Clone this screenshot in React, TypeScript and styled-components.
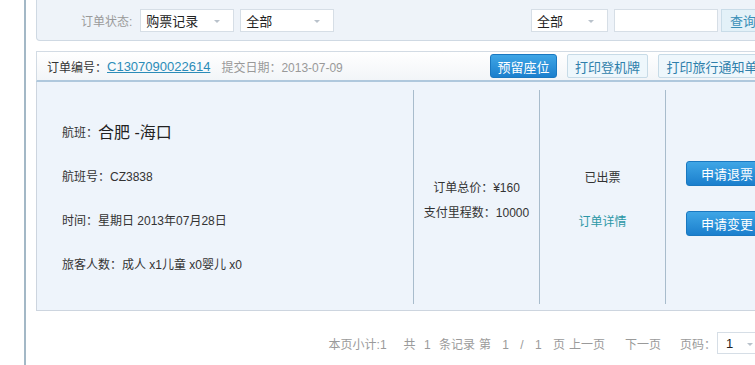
import React from "react";
import styled, { createGlobalStyle } from "styled-components";

const GlobalStyle = createGlobalStyle`
  html, body {
    margin: 0;
    padding: 0;
    background: #ffffff;
    overflow: hidden;
  }
  body {
    font-family: "Liberation Sans", "Noto Sans CJK SC", Arial, sans-serif;
    font-size: 12px;
    color: #333333;
  }
`;

const passengers = [
  { label: "成人", count: 1 },
  { label: "儿童", count: 0 },
  { label: "婴儿", count: 0 },
];

const App = () => {
  return (
    <>
      <GlobalStyle />
      <Page>
        <SideRule />
        <Content>
          <FilterPanel>
            <FilterLabel>订单状态:</FilterLabel>
            <Select $width={94}>
              购票记录
              <Caret />
            </Select>
            <Select $width={94}>
              全部
              <Caret />
            </Select>
            <SearchGroup>
              <Select $width={77}>
                全部
                <Caret />
              </Select>
              <SearchInput />
              <QueryButton>查询</QueryButton>
            </SearchGroup>
          </FilterPanel>

          <OrderCard>
            <OrderHeader>
              <HeaderLabel>订单编号：</HeaderLabel>
              <OrderLink>C1307090022614</OrderLink>
              <SubmitDate>提交日期：2013-07-09</SubmitDate>
              <HeaderActions>
                <PrimaryButton $width={67} $height={24}>
                  预留座位
                </PrimaryButton>
                <GhostButton $width={81}>打印登机牌</GhostButton>
                <GhostButton $width={108}>打印旅行通知单</GhostButton>
              </HeaderActions>
            </OrderHeader>

            <OrderBody>
              <FlightColumn>
                <InfoLine>
                  航班：<Route>合肥 -海口</Route>
                </InfoLine>
                <InfoLine>航班号：CZ3838</InfoLine>
                <InfoLine>时间：星期日 2013年07月28日</InfoLine>
                <InfoLine>
                  旅客人数：
                  {passengers.map((p) => `${p.label} x${p.count}`).join("")}
                </InfoLine>
              </FlightColumn>

              <CenterColumn $lineHeight={25} $offset={8}>
                <div>订单总价：¥160</div>
                <div>支付里程数：10000</div>
              </CenterColumn>

              <CenterColumn $lineHeight={44} $offset={6}>
                <div>已出票</div>
                <DetailLink>订单详情</DetailLink>
              </CenterColumn>

              <ActionColumn>
                <PrimaryButton $width={82} $height={25}>
                  申请退票
                </PrimaryButton>
                <PrimaryButton $width={82} $height={25}>
                  申请变更
                </PrimaryButton>
              </ActionColumn>
            </OrderBody>
          </OrderCard>

          <Pager>
            <PagerText>本页小计:1</PagerText>
            <PagerText $gap={17} $spacing={5}>
              共 1 条记录
            </PagerText>
            <PagerText $gap={4} $spacing={8}>
              第 1 / 1 页
            </PagerText>
            <PagerText $gap={4}>上一页</PagerText>
            <PagerText $gap={20}>下一页</PagerText>
            <PagerText $gap={19}>页码：</PagerText>
            <PageSelect>
              1
              <Caret />
            </PageSelect>
          </Pager>
        </Content>
      </Page>
    </>
  );
};

export default App;

const Page = styled.div`
  display: flex;
  width: 800px;
  min-height: 365px;
`;

const SideRule = styled.div`
  width: 2px;
  margin-left: 24px;
  margin-right: 10px;
  background: #a3b8c6;
  align-self: stretch;
  min-height: 365px;
`;

const Content = styled.div`
  width: 740px;
  display: flex;
  flex-direction: column;
`;

const FilterPanel = styled.div`
  height: 40px;
  display: flex;
  align-items: center;
  gap: 6px;
  padding: 0 10px 0 44px;
  background: #eef3f9;
  border: 1px solid #cfd9e3;
  border-top: none;
  border-radius: 0 0 4px 4px;
`;

const FilterLabel = styled.span`
  color: #9a9a9a;
  font-size: 12px;
  margin-right: 2px;
`;

const Select = styled.div<{ $width: number }>`
  position: relative;
  width: ${(p) => p.$width}px;
  height: 23px;
  box-sizing: border-box;
  display: flex;
  align-items: center;
  padding-left: 5px;
  background: #ffffff;
  border: 1px solid #d6dee6;
  font-size: 13px;
  color: #222;
`;

const Caret = styled.span`
  position: absolute;
  right: 13px;
  top: 10px;
  width: 0;
  height: 0;
  border-left: 3px solid transparent;
  border-right: 3px solid transparent;
  border-top: 3px solid #b9c2cb;
`;

const SearchGroup = styled.div`
  margin-left: auto;
  display: flex;
  align-items: center;
`;

const SearchInput = styled.div`
  width: 104px;
  height: 23px;
  box-sizing: border-box;
  margin-left: 6px;
  background: #ffffff;
  border: 1px solid #d6dee6;
`;

const QueryButton = styled.div`
  margin-left: 3px;
  height: 23px;
  box-sizing: border-box;
  padding: 0 8px;
  display: flex;
  align-items: center;
  background: #e3f1f8;
  border: 1px solid #c9dce8;
  color: #3a8fb7;
  font-size: 13px;
`;

const OrderCard = styled.div`
  margin-top: 10px;
  display: flex;
  flex-direction: column;
`;

const OrderHeader = styled.div`
  height: 28px;
  display: flex;
  align-items: center;
  padding: 0 9px 0 10px;
  background: linear-gradient(#ffffff, #f2f5f8);
  border: 1px solid #d2dbe4;
  border-bottom: 2px solid #afc8dd;
`;

const HeaderLabel = styled.span`
  color: #333;
`;

const OrderLink = styled.a`
  color: #2b8cb8;
  text-decoration: underline;
  font-size: 13px;
`;

const SubmitDate = styled.span`
  margin-left: 11px;
  color: #999999;
`;

const HeaderActions = styled.div`
  margin-left: auto;
  display: flex;
  gap: 10px;
  align-items: center;
`;

const PrimaryButton = styled.div<{ $width: number; $height: number }>`
  width: ${(p) => p.$width}px;
  height: ${(p) => p.$height}px;
  box-sizing: border-box;
  display: flex;
  align-items: center;
  justify-content: center;
  border-radius: 3px;
  background: linear-gradient(#3fa6e6, #1b7fcd);
  border: 1px solid #1a78c0;
  color: #ffffff;
  font-size: 13px;
`;

const GhostButton = styled.div<{ $width: number }>`
  width: ${(p) => p.$width}px;
  height: 24px;
  box-sizing: border-box;
  display: flex;
  align-items: center;
  justify-content: center;
  border-radius: 2px;
  background: #eef7fc;
  border: 1px solid #c7dbe7;
  color: #2e7fab;
  font-size: 13px;
`;

const OrderBody = styled.div`
  display: grid;
  grid-template-columns: 376px 126px 126px 1fr;
  padding: 8px 0 6px;
  background: #eef4fb;
  border: 1px solid #cdd5df;
  border-top: none;
  height: 229px;
  box-sizing: border-box;
`;

const FlightColumn = styled.div`
  display: flex;
  flex-direction: column;
  justify-content: center;
  padding-left: 25px;
`;

const InfoLine = styled.div`
  height: 44px;
  display: flex;
  align-items: center;
  white-space: pre;
  color: #333;
`;

const Route = styled.span`
  font-size: 16px;
  color: #222;
`;

const CenterColumn = styled.div<{ $lineHeight: number; $offset: number }>`
  border-left: 1px solid #a8bccc;
  display: flex;
  flex-direction: column;
  justify-content: center;
  align-items: center;
  padding-top: ${(p) => p.$offset}px;
  line-height: ${(p) => p.$lineHeight}px;
  color: #333;
`;

const DetailLink = styled.a`
  color: #2a97a6;
`;

const ActionColumn = styled.div`
  border-left: 1px solid #a8bccc;
  display: flex;
  flex-direction: column;
  justify-content: center;
  gap: 25px;
  padding-left: 20px;
  padding-top: 2px;
`;

const Pager = styled.div`
  margin-top: 21px;
  display: flex;
  align-items: center;
  justify-content: flex-end;
  padding-right: 9px;
  color: #9a9a9a;
  font-size: 12px;
`;

const PagerText = styled.span<{ $gap?: number; $spacing?: number }>`
  margin-left: ${(p) => p.$gap ?? 0}px;
  word-spacing: ${(p) => p.$spacing ?? 0}px;
  white-space: pre;
`;

const PageSelect = styled.div`
  position: relative;
  margin-left: 1px;
  width: 50px;
  height: 22px;
  box-sizing: border-box;
  display: flex;
  align-items: center;
  padding-left: 8px;
  background: #ffffff;
  border: 1px solid #d6dee6;
  color: #222;
  font-size: 13px;
`;
